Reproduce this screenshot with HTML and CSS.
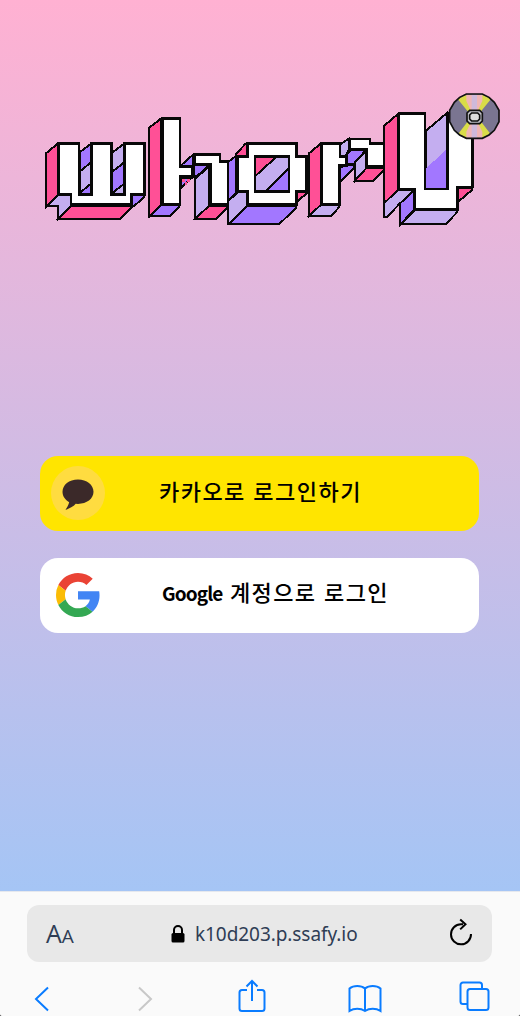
FILE: index.html
```
<!DOCTYPE html>
<html lang="ko">
<head>
<meta charset="utf-8">
<title>whorU</title>
<link rel="stylesheet" href="styles.css">
</head>
<body>
<div class="phone">
<main class="login">
<svg class="logo" viewBox="40 88 464 142" role="img" aria-label="whorU">
<g class="block" transform="translate(35 105) scale(.33333)">
<path class="pink" d="M34 144 68 116V270L34 304Z"/>
<path class="purple" d="M134 142 168 116V172L134 200Z"/><path class="lilac" d="M134 200 168 172V236L134 264Z"/><path class="purple" d="M134 264 168 236V268H134Z"/>
<path class="lilac" d="M232 142 268 116V172L232 200Z"/><path class="purple" d="M232 200 268 172V236L232 264Z"/><path class="lilac" d="M232 264 268 236V268H232Z"/>
<path class="lilac" d="M34 304 68 270H108V302L68 342V304Z"/>
<path class="pink" d="M68 342 108 302H296L256 342Z"/>
<path class="purple" d="M292 270H328V276L296 304H292Z"/>
<path class="face" d="M72 116H132V268H170V116H230V268H268V116H328V268H290V298H108V268H72Z"/>
</g>
<g class="block" transform="translate(140 105) scale(.33333)">
<path class="pink" d="M28 68 64 40V300L28 334Z"/><path class="purple" d="M28 334 64 300H118V306L90 334Z"/>
<path class="purple" d="M122 182 160 148V182Z"/>
<path class="purple" d="M122 218H156L122 250Z"/><path class="spots" d="M126 222h8v8h-8zM142 222h8v8h-8zM134 232h7v7h-7z"/>
<path class="purple" d="M162 180H208L164 220Z"/><path class="lilac" d="M164 222 208 184V302L164 342Z"/><path class="pink" d="M164 342 208 302H262V308L228 342Z"/>
<path class="face" d="M68 40H120V186H158V214H120V298H68Z"/>
<path class="face" d="M164 148H240V170H264V298H211V178H164Z"/>
</g>
<g class="block" transform="translate(215 105) scale(.33333)">
<path class="pink" d="M62 148 90 118H98V154H62Z"/><path class="purple" d="M38 172 64 152V262L38 290Z"/>
<path class="lilac" d="M38 356V290L68 262H98V302L42 356Z"/><path class="purple" d="M42 356 98 302H244V308L194 356Z"/>
<path class="pink" d="M246 262H274V266L246 290Z"/>
<path class="face" d="M98 116H244V154H276V260H244V298H98V258H68V154H98Z"/>
<path class="lilac" d="M120 154H222V260H120Z"/><path class="pink" d="M120 154H186L120 214Z"/><path class="purple" d="M222 190V260H150Z"/>
<path class="frame" d="M120 154H222V260H120Z"/><path class="gap" d="M271 150H285V268H271Z"/>
</g>
<g class="block" transform="translate(290 105) scale(.33333)">
<path class="pink" d="M56 146 92 116V300L56 334Z"/><path class="lilac" d="M56 334 92 300H148V306L122 334Z"/>
<path class="lilac" d="M150 118 178 100V130L168 152H150Z"/>
<path class="purple" d="M150 186 192 178V190L150 230Z"/>
<path class="purple" d="M170 150 182 134H228L194 176H170Z"/>
<path class="lilac" d="M194 228V172L230 136V188Z"/><path class="pink" d="M194 228 230 188H282V196L248 228Z"/>
<path class="face" d="M96 116H150V156H168V182H148V298H96Z"/>
<path class="face" d="M180 102H240V116H284V184H230V132H180Z"/>
</g>
<g class="block" transform="translate(375 85) scale(.33333)">
<path class="pink" d="M28 122 70 86V314L28 354Z"/><path class="lilac" d="M28 354 70 314H120L74 356 36 396H28Z"/>
<path class="purple" d="M74 356 118 316V374L76 418Z"/><path class="lilac" d="M76 418 120 374H246V382L212 418Z"/>
<path class="pink" d="M250 308H292V314L250 350Z"/>
<path class="lilac" d="M152 138 216 84V312H152Z"/><path class="purple flat" d="M154 250 215 192V312H154Z"/>
<path class="face" d="M72 86H150V312H218V86H292V306H248V374H120V312H72Z"/>
<g class="disc">
<path class="steel" d="M274 27H322L342 37 358 52 372 76V110L358 136 342 150 322 160H274L254 150 238 136 224 110V76L238 52 254 37Z"/>
<path class="yellow" d="M248 42 274 29 298 94 322 29 348 42 312 86V102L346 146 322 158 298 94 274 158 250 146 284 102V86Z"/>
<path class="blush" d="M274 29H322V48L308 78H288L274 48ZM288 112H308L322 140V158H274V140Z"/>
<path class="mist" d="M290 29H306V74H290ZM290 114H306V158H290Z"/>
<path class="steel-light" d="M284 76H314L322 84V108L314 116H284L276 108V84Z"/>
<path class="hub" d="M290 84H308L314 90V102L308 108H290L284 102V90Z"/>
<path class="outline" d="M274 27H322L342 37 358 52 372 76V110L358 136 342 150 322 160H274L254 150 238 136 224 110V76L238 52 254 37Z"/>
</g>
</g>
</svg>
<button class="signin kakao">
<svg class="badge" viewBox="0 0 54 54"><circle cx="27" cy="27" r="27" fill="#ffdc40"/><path d="M27 13.500c-9 0-15.500 5.400-15.500 12.300 0 4.400 2.700 8.300 6.700 10.500-.8 3-2 5-3.800 7.700 5-1.800 8.500-3.800 10.300-6.200l2.300.1c8.700 0 15.500-5.100 15.500-12.100S35.700 13.500 27 13.500Z" fill="#3b2929"/></svg>
<span class="label">카카오로 로그인하기</span>
</button>
<button class="signin google">
<svg class="gmark" viewBox="0 0 48 48"><path fill="#ea4335" d="M24 9.500c3.540 0 6.710 1.220 9.210 3.600l6.850-6.850C35.900 2.380 30.470 0 24 0 14.620 0 6.510 5.380 2.560 13.220l7.980 6.190C12.430 13.720 17.740 9.500 24 9.500z"/><path fill="#4285f4" d="M47.500 24.500c0-1.600-.15-3.100-.4-4.500H24v9.020h12.940c-.58 2.960-2.260 5.480-4.780 7.180l7.730 6c4.510-4.180 7.610-10.360 7.610-17.700z"/><path fill="#fbbc05" d="M10.530 28.590A14.500 14.500 0 0 1 9.770 24c0-1.600.27-3.140.76-4.590l-7.980-6.190A23.990 23.990 0 0 0 0 24c0 3.870.92 7.530 2.560 10.780l7.970-6.190z"/><path fill="#34a853" d="M24 48c6.480 0 11.930-2.130 15.890-5.810l-7.730-6C30.010 37.640 27.240 38.500 24 38.500c-6.260 0-11.570-4.220-13.470-9.910l-7.980 6.190C6.510 42.620 14.620 48 24 48z"/></svg>
<span class="label"><span class="latin">Google</span> 계정으로 로그인</span>
</button>
</main>
<footer class="browser">
<div class="address">
<span class="aa">A<small>A</small></span>
<span class="site"><svg class="lock" viewBox="0 0 14 18"><path d="M3 9V5a4 4 0 0 1 8 0v4" fill="none" stroke="#000" stroke-width="2"/><rect x=".5" y="8" width="13" height="9.500" rx="1.500"/></svg><span class="url">k10d203.p.ssafy.io</span></span>
<svg class="reload" viewBox="0 0 24 28"><path d="M14 6.300H12A10 10 0 1 0 22 16M11.200 1.400 16.500 6.300 11.200 11.400" fill="none" stroke="#000" stroke-width="2"/></svg>
</div>
<nav class="tools">
<svg class="back" viewBox="0 0 16 26"><path d="M14 1.500 2 13l12 11.500"/></svg>
<svg class="forward" viewBox="0 0 16 26"><path d="m2 1.500 12 11.500L2 24.500"/></svg>
<svg class="share" viewBox="0 0 28 34"><path d="M9 11H4a2.500 2.500 0 0 0-2.500 2.500v16A2.500 2.500 0 0 0 4 32h20a2.500 2.500 0 0 0 2.500-2.500v-16A2.500 2.500 0 0 0 24 11h-5M14 22V2M8.500 7.500 14 2l5.500 5.500"/></svg>
<svg class="book" viewBox="0 0 34 29"><path d="M17 4.500C13 1 5.500 1 1.500 4.500V27c4.500-3 11-3 15.500 0 4.500-3 11-3 15.500 0V4.500C28.500 1 21 1 17 4.500ZM17 4.500V27"/></svg>
<svg class="tabs" viewBox="0 0 31 31"><path d="M23 7V4a2.500 2.500 0 0 0-2.500-2.500H4A2.500 2.500 0 0 0 1.500 4v16.500A2.500 2.500 0 0 0 4 23h4"/><rect x="8.500" y="8" width="21" height="21" rx="2.500"/></svg>
</nav>
</footer>
</div>
</body>
</html>
```
FILE: styles.css
```
* { box-sizing: border-box; }
body { margin: 0; background: #555; }
.phone { width: 520px; height: 1016px; display: flex; flex-direction: column; overflow: hidden; border-radius: 0 0 3px 3px; background: #fafafa; }
.login { height: 890.5px; flex: none; padding: 88px 16px 0 40px; background: linear-gradient(#ffb1d2, #a5c5f5); }
.logo { display: block; width: 464px; height: 142px; shape-rendering: crispEdges; }
.block path { stroke: #080808; stroke-width: 6; }
.block .face { fill: #fff; stroke-width: 8; }
.pink { fill: #ff5096; }
.purple { fill: #a277ff; }
.lilac { fill: #c4aef0; }
.block .flat { stroke: none; }
.block .frame { fill: none; stroke-width: 8; }
.block .gap { fill: #080808; stroke: none; }
.block .spots { fill: #ff5096; stroke: none; }
.disc { shape-rendering: auto; }
.disc path { stroke: none; }
.steel { fill: #7a7591; }
.yellow { fill: #d9dc48; }
.blush { fill: #f0b5b5; }
.mist { fill: #cfb9db; }
.disc .steel-light { fill: #c2c2ca; stroke: #111; stroke-width: 5; }
.disc .hub { fill: #ddd; stroke: #111; stroke-width: 5; }
.disc .outline { fill: none; stroke: #111; stroke-width: 5; }
.signin { display: flex; align-items: center; width: 439px; height: 75px; padding: 0; border: 0; border-radius: 18px; color: #000; font: 500 22px/30px "Noto Sans CJK KR", sans-serif; text-align: left; white-space: nowrap; }
.kakao { margin-top: 225.5px; background: #ffe500; }
.google { margin-top: 27px; background: #fff; }
.badge { width: 54px; height: 54px; margin-left: 11px; }
.gmark { width: 44px; height: 44px; margin-left: 16px; }
.label { padding-bottom: 6px; }
.kakao .label { margin-left: 54px; letter-spacing: 1.45px; }
.google .label { margin-left: 62px; letter-spacing: 1.4px; }
.latin { font-size: 19px; font-weight: 700; letter-spacing: -.9px; }
.browser { flex: 1; padding: 13.5px 28px 0 27px; background: #fafafa; border-top: 1px solid #e5e8ee; }
.address { display: flex; align-items: center; height: 57px; padding: 0 19px 0 19px; border-radius: 12px; background: #e8e8e8; color: #2f3d55; font-family: "Open Sans", sans-serif; }
.aa { width: 125px; font-size: 25px; font-weight: 400; line-height: 30px; padding-top: 2px; }
.aa small { font-size: 19px; }
.site { display: flex; align-items: center; gap: 10px; flex: 1; }
.lock { width: 14px; height: 18px; }
.url { font-family: "Noto Sans", sans-serif; font-size: 19px; line-height: 28px; letter-spacing: -.07px; }
.reload { width: 24px; height: 28px; margin-bottom: 4px; }
.tools { display: grid; grid-template-columns: 103px 101px 110px 111px 31px; height: 53px; padding-left: 7px; }
.tools svg { fill: none; stroke: #0a7cff; stroke-width: 2; }
.back { width: 16px; height: 26px; margin-top: 24px; }
.tools .forward { width: 16px; height: 26px; margin-top: 24px; stroke: #c8c8c8; }
.share { width: 28px; height: 34px; margin-top: 17px; }
.book { width: 34px; height: 29px; margin-top: 22px; }
.tabs { width: 31px; height: 31px; margin-top: 19px; }
```
